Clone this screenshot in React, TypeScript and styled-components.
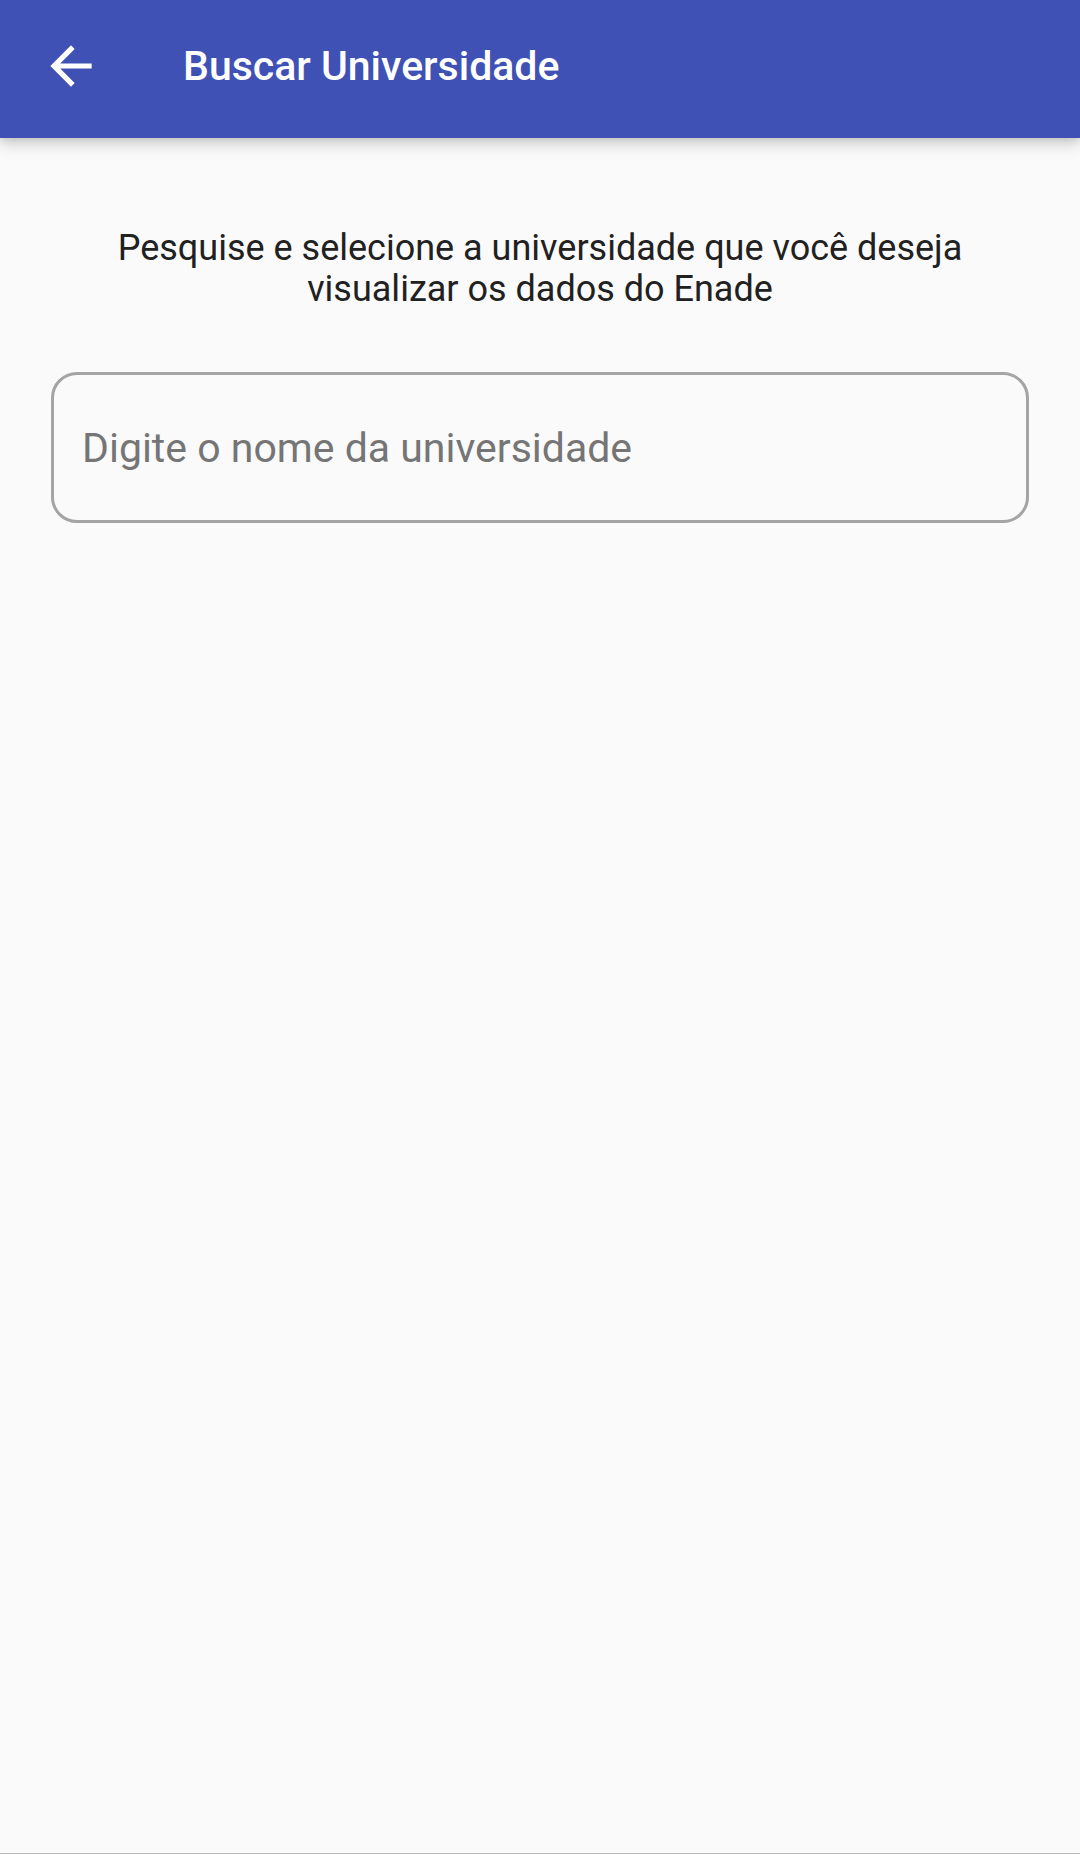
import React, { useState } from "react";
import styled, { createGlobalStyle } from "styled-components";

const GlobalStyle = createGlobalStyle`
  *, *::before, *::after {
    box-sizing: border-box;
  }

  body {
    margin: 0;
    background: #fafafa;
    color: #212121;
    font-family: Roboto, "Liberation Sans", sans-serif;
  }
`;

const Page = styled.div`
  display: flex;
  flex-direction: column;
  min-height: 100vh;
  border-bottom: 1px solid #bdbdbd;
`;

const AppBar = styled.header`
  display: flex;
  align-items: center;
  gap: 73px;
  padding: 20px 32px 26px;
  background: #3f51b5;
  color: #ffffff;
  box-shadow: 0 6px 14px rgba(0, 0, 0, 0.18), 0 2px 6px rgba(0, 0, 0, 0.08);
`;

const BackButton = styled.button`
  display: flex;
  padding: 15px 8px;
  border: 0;
  background: none;
  color: inherit;
  cursor: pointer;
`;

const BackIcon = styled.svg`
  display: block;
  width: 62px;
  height: 62px;
  fill: currentColor;
`;

const Title = styled.h1`
  margin: 0;
  font-size: 41px;
  font-weight: 500;
  line-height: 48px;
`;

const Content = styled.main`
  display: flex;
  flex-direction: column;
  gap: 62px;
  padding: 90px 51px;
`;

const Prompt = styled.label`
  padding: 0 51px;
  font-size: 36px;
  line-height: 41px;
  text-align: center;
`;

const SearchInput = styled.input`
  width: 100%;
  padding: 49px 28px 48px;
  border: 3px solid #a4a4a4;
  border-radius: 26px;
  outline: none;
  background: transparent;
  color: inherit;
  font-family: inherit;
  font-size: 41px;
  line-height: 48px;

  &::placeholder {
    color: #757575;
    opacity: 1;
  }

  &:focus {
    border-color: #3f51b5;
  }
`;

export default function App() {
  const [query, setQuery] = useState("");

  return (
    <>
      <GlobalStyle />
      <Page>
        <AppBar>
          <BackButton type="button" aria-label="Voltar">
            <BackIcon viewBox="0 0 24 24" aria-hidden="true">
              <path d="M20 11H7.83l5.59-5.59L12 4l-8 8 8 8 1.41-1.41L7.83 13H20v-2z" />
            </BackIcon>
          </BackButton>
          <Title>Buscar Universidade</Title>
        </AppBar>
        <Content>
          <Prompt htmlFor="university">
            Pesquise e selecione a universidade que você deseja visualizar os dados do Enade
          </Prompt>
          <SearchInput
            id="university"
            type="text"
            placeholder="Digite o nome da universidade"
            value={query}
            onChange={(event) => setQuery(event.target.value)}
          />
        </Content>
      </Page>
    </>
  );
}
